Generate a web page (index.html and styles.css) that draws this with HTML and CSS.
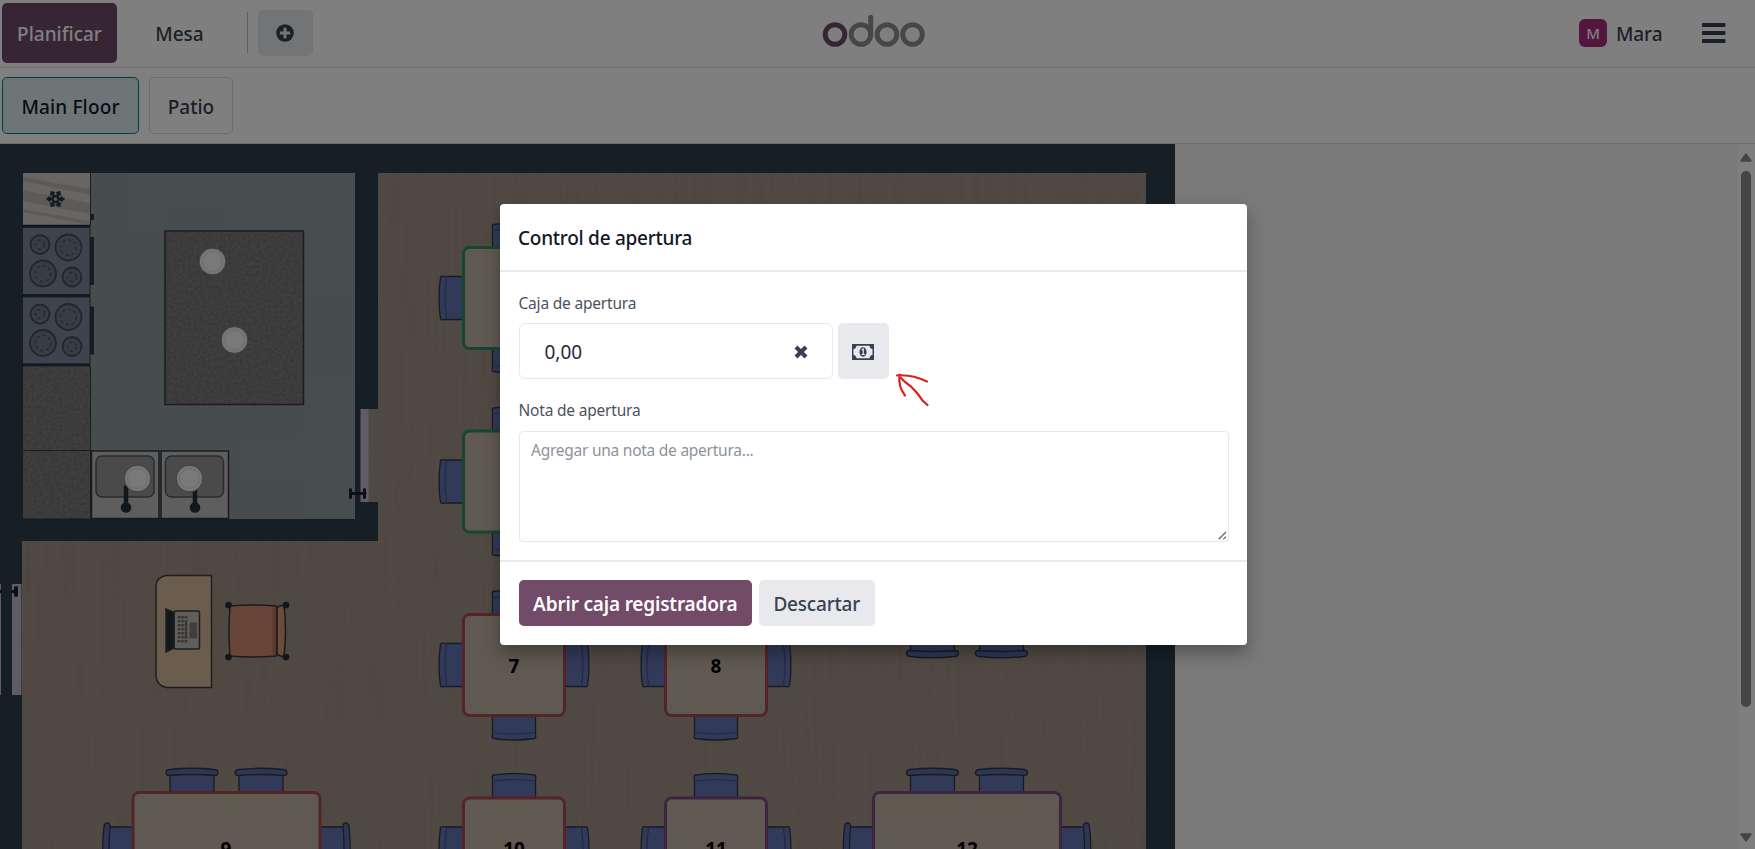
FILE: index.html
```html
<!DOCTYPE html>
<html lang="es">
<head>
<meta charset="utf-8">
<title>Odoo POS</title>
<link rel="stylesheet" href="styles.css">
</head>
<body>
<div class="app">
  <header class="navbar">
    <button class="btn-plan"><span class="t-plan">Planificar</span></button>
    <button class="btn-table"><span class="t-mesa">Mesa</span></button>
    <span class="divider"></span>
    <button class="btn-add"><svg width="18" height="18" viewBox="0 0 18 18"><circle cx="9" cy="9" r="8.8" fill="#374151"/><path d="M9 3.800v10.400M3.800 9h10.400" stroke="#e7e9ed" stroke-width="3"/></svg></button>
    <svg class="logo" width="104" height="34" viewBox="0 0 104 34" fill="none" stroke-width="5">
      <circle cx="13" cy="20.5" r="9.8" stroke="#714b67"/>
      <g stroke="#8f8f8f"><circle cx="39" cy="20.5" r="9.8"/><circle cx="65" cy="20.5" r="9.8"/><circle cx="90.5" cy="20.5" r="9.8"/><path d="M48.700 20.500V3.300" stroke-linecap="round"/></g>
    </svg>
    <div class="user"><span class="avatar">M</span><span class="t-user">Mara</span></div>
    <svg class="burger" width="24" height="20" viewBox="0 0 24 20" fill="#374151"><rect width="23.5" height="4" rx="1"/><rect y="8" width="23.5" height="4" rx="1"/><rect y="16" width="23.5" height="4" rx="1"/></svg>
  </header>
  <nav class="floors">
    <button class="floor active"><span class="t-main">Main Floor</span></button>
    <button class="floor patio"><span class="t-patio">Patio</span></button>
  </nav>
  <main class="stage">
    <svg class="map" width="1175" height="705" viewBox="0 144 1175 705">
      <defs>
        <filter id="wood" x="0" y="0" width="100%" height="100%"><feTurbulence type="fractalNoise" baseFrequency="0.22 0.008" numOctaves="3" seed="4"/><feColorMatrix values="0 0 0 0 .25  0 0 0 0 .2  0 0 0 0 .15  .9 0 0 0 -.3"/></filter>
        <filter id="grain" x="0" y="0" width="100%" height="100%"><feTurbulence type="fractalNoise" baseFrequency="0.35" numOctaves="3" seed="8"/><feColorMatrix values="0 0 0 0 0  0 0 0 0 0  0 0 0 0 0  1 0 0 0 -.35"/></filter>
        <clipPath id="room"><path d="M378 173H1146V849H22V541H378V502H368V409H378z"/></clipPath>
        <g id="chair">
          <path d="M-21.500 1V-17.500q-1-3.500 1-4q20-3 41 0q2 .5 1 4V1z" fill="#6474b2" stroke="#2d3649" stroke-width="1.300"/>
          <path d="M-20-15.500q20-3 40 0" fill="none" stroke="#45527f" stroke-width="1.200"/>
        </g>
        <g id="seat">
          <path d="M-22 8V-18H22V8z" fill="#6474b2" stroke="#2d3649" stroke-width="1.300"/>
          <path d="M-21-15q21-3 42 0v-3h-42z" fill="#566399"/>
          <path d="M-22.500-21.500q22.500-2.500 45 0q3.500.5 3.500 3.300t-3.500 2.700q-22.500-2-45 0q-3.500 0-3.500-2.700t3.500-3.300z" fill="#5e6ca8" stroke="#2d3649" stroke-width="1.300"/>
        </g>
        <g id="around">
          <use href="#chair" transform="translate(52 0)"/><use href="#chair" transform="translate(52 104) rotate(180)"/>
          <use href="#chair" transform="translate(0 52) rotate(-90)"/><use href="#chair" transform="translate(104 52) rotate(90)"/>
        </g>
        <g id="longset">
          <use href="#seat" transform="translate(60.500 0)"/><use href="#seat" transform="translate(129.500 0)"/>
          <use href="#seat" transform="translate(-6 58) rotate(-90)"/><use href="#seat" transform="translate(196 58) rotate(90)"/>
        </g>
        <g id="stove">
          <rect x=".5" y=".5" width="67.500" height="67" fill="#7d899a" stroke="#2d3f4c"/>
          <g fill="#707a88" stroke="#434c5a" stroke-width="1.800"><circle cx="18" cy="17.500" r="9.500"/><circle cx="46.500" cy="20.500" r="13"/><circle cx="21" cy="46.500" r="13"/><circle cx="50" cy="50" r="9.500"/></g>
          <g fill="none" stroke="#4a5462" stroke-width="1.500" stroke-dasharray="3 3"><circle cx="18" cy="17.500" r="4.500"/><circle cx="46.500" cy="20.500" r="7.800"/><circle cx="21" cy="46.500" r="7.800"/><circle cx="50" cy="50" r="4.500"/></g>
          <rect x="68" y="10" width="4" height="48" fill="#2b3a45"/>
        </g>
        <g id="plate"><circle r="13.400" fill="#ececec" stroke="#777" stroke-width="1"/><circle r="9.800" fill="#f2f2f2" stroke="#dcdcdc"/></g>
        <g id="sink">
          <rect x="1" y="1" width="67.500" height="67.500" fill="#bdbcbc" stroke="#2d3640" stroke-width="1.500"/>
          <rect x="5.500" y="6" width="58" height="41" rx="6" fill="#969595" stroke="#54575a" stroke-width="1.500"/>
        </g>
        <g id="faucet"><path d="M0-22V0" stroke="#22303b" stroke-width="4.500"/><circle r="5.300" fill="#22303b"/></g>
      </defs>
      <rect y="143" width="1175" height="706" fill="#2d3f4c"/>
      <path d="M378 173H1146V849H22V541H378V502H368V409H378z" fill="#a39488"/>
      <g clip-path="url(#room)"><rect x="22" y="173" width="1124" height="676" filter="url(#wood)" opacity=".4"/></g>
      <rect x="90" y="173" width="265" height="346" fill="#8e9b9f"/>
      <path d="M90 173h40v60h35v-30h60v28h78v60h52v90h-52v58h-60v40h60v40h52V173z" fill="#96a39f" opacity=".2"/>
      <g>
        <rect x="22" y="173" width="68" height="53" fill="#cfccca"/>
        <path d="M22 177l68 12v6l-68-14zM22 190l68 13v11l-68-13zM22 209l68 12v4l-68-13z" fill="#bbb7b5"/>
        <path d="M22.500 173v53h68v-53" fill="none" stroke="#2d3f4c"/>
        <g stroke="#263440" stroke-width="2.300" transform="translate(55.500 199)"><g id="arms"><path id="arm" d="M3 0h6M6.200-2.600v5.200"/><use href="#arm" transform="rotate(60)"/><use href="#arm" transform="rotate(120)"/></g><use href="#arms" transform="rotate(180)"/><circle r="3" fill="none"/></g>
        <rect x="90" y="214" width="4" height="6" fill="#2b3a45"/>
      </g>
      <use href="#stove" x="22" y="227"/><use href="#stove" x="22" y="296.500"/>
      <path d="M22 225.700h68M22 295.200h68M22 364.800h68" stroke="#22303b" stroke-width="2"/>
      <g fill="#7e7e7e" stroke="#34393e"><path d="M22.500 366h68v84.500h-68zM22.500 450.500h68V519h-68z"/><rect x="165" y="231" width="138.500" height="173.500" stroke-width="1.500"/></g>
      <path d="M23 367h67v152H23z" filter="url(#grain)" opacity=".3"/><path d="M166 232h137v172H166z" filter="url(#grain)" opacity=".3"/>
      <use href="#plate" x="212.500" y="261.500"/><use href="#plate" x="234.500" y="340"/>
      <use href="#sink" x="90.500" y="450"/><use href="#sink" x="160" y="450"/>
      <use href="#faucet" x="126" y="507.500"/><use href="#faucet" x="195" y="507.500"/>
      <use href="#plate" x="137.500" y="478.500"/><use href="#plate" x="189.500" y="478.500"/>
      <g fill="#bebbc6"><rect x="360.500" y="409" width="8" height="93"/><rect x="12" y="584" width="9.500" height="111"/><rect y="584" width="1" height="111"/></g>
      <g stroke="#172129" stroke-linecap="round"><path d="M351 493.500h14" stroke-width="3"/><path d="M350.500 489.500v8M364.500 489.500v8" stroke-width="3"/><path d="M0 591.500h1M12.500 591.500h4" stroke-width="3"/><path d="M16 588v7" stroke-width="4"/></g>
      <g stroke="#3c3b3e" stroke-width="1.500">
        <path d="M211.500 575.500H166q-10 2-10 11v90q1 9 10 11h45.500z" fill="#d6bb9c"/>
        <rect x="174" y="611" width="25.500" height="38" rx="1.500" fill="#c0bcb6"/>
        <path d="M166 609l8 3.500v35.500l-8 4z" fill="#22303b"/>
        <path d="M179 616v28M182.500 616v28M186 616v28" stroke="#746d68" stroke-width="2.800" stroke-dasharray="2.500 1.500"/><path d="M186 621v18" stroke="#746d68" stroke-width="2"/>
        <rect x="189.500" y="622.500" width="7.500" height="16" fill="#827d79" stroke="none"/>
      </g>
      <g stroke="#34363d" stroke-width="1.500">
        <path d="M230 606q24-2 46 0l.5 1v48l-.5 1q-24 2-46 0-2-25 0-50z" fill="#d38b6f"/><path d="M274 607v48" stroke="#b67156" stroke-width="3"/>
        <path d="M277 608q2-3 7-2.500 3 25 0 51-5 0-7-3z" fill="#d99777"/>
        <g fill="#22303b" stroke="#22303b"><circle cx="228.500" cy="605" r="2.600"/><circle cx="286" cy="605" r="2.600"/><circle cx="228.500" cy="657" r="2.600"/><circle cx="286" cy="657" r="2.600"/></g>
      </g>
      <use href="#around" x="462" y="246"/><use href="#around" x="462" y="429.500"/><use href="#around" x="462" y="613"/><use href="#around" x="664" y="613"/><use href="#around" x="462" y="796.500"/><use href="#around" x="664" y="796.500"/>
      <use href="#longset" x="131.500" y="791"/><use href="#longset" x="872" y="791"/>
      <g transform="translate(0 635)"><use href="#seat" transform="translate(932.500 0) rotate(180)"/><use href="#seat" transform="translate(1001.500 0) rotate(180)"/></g>
      <g fill="#bfb2a3" stroke-width="3">
        <g stroke="#2c8c56"><rect x="463.500" y="247.500" width="101" height="101" rx="6"/><rect x="463.500" y="431" width="101" height="101" rx="6"/></g>
        <g stroke="#a9484c"><rect x="463.500" y="614.500" width="101" height="101" rx="6"/><rect x="665.500" y="614.500" width="101" height="101" rx="6"/><rect x="463.500" y="798" width="101" height="101" rx="6"/><rect x="133" y="792.500" width="187" height="120" rx="6"/></g>
        <g stroke="#7b4a7e"><rect x="665.500" y="798" width="101" height="101" rx="6"/><rect x="873.500" y="792.500" width="187" height="120" rx="6"/></g>
      </g>
      <g class="num"><text x="514" y="672.500">7</text><text x="716" y="672.500">8</text><text x="514" y="856">10</text><text x="716" y="856">11</text><text x="226" y="856">9</text><text x="967" y="856">12</text></g>
    </svg>
    <div class="scrollbar">
      <svg width="12" height="9" viewBox="0 0 12 9"><path d="M6 1L11 8H1z" fill="#8a8a8a" stroke="#8a8a8a" stroke-width="1.500" stroke-linejoin="round"/></svg>
      <span class="thumb"></span>
      <svg width="12" height="9" viewBox="0 0 12 9"><path d="M6 8L11 1H1z" fill="#8a8a8a" stroke="#8a8a8a" stroke-width="1.500" stroke-linejoin="round"/></svg>
    </div>
  </main>
</div>
<div class="overlay">
  <section class="modal">
    <header class="modal-head"><span class="t-title">Control de apertura</span></header>
    <div class="modal-body">
      <label class="label"><span class="t-caja">Caja de apertura</span></label>
      <div class="cash">
        <div class="amount"><span class="t-amt">0,00</span><svg width="14" height="14" viewBox="0 0 14 14"><path d="M2 2l10 10M12 2L2 12" stroke="#374151" stroke-width="4.200"/></svg></div>
        <button class="money"><svg width="22" height="16" viewBox="0 0 22 16"><path d="M0 0h22v16H0z" fill="#374151"/><path d="M4.500 1.700h13q.3 3 3 3.300v6q-2.700.3-3 3.300h-13q-.3-3-3-3.300V5q2.700-.3 3-3.300z" fill="#e7e9ed"/><ellipse cx="11" cy="8" rx="3.600" ry="4.700" fill="#374151"/><path d="M9.700 6l1.600-1v5.300M9.600 10.500h3.200" fill="none" stroke="#e7e9ed" stroke-width="1.200"/></svg></button>
      </div>
      <label class="label second"><span class="t-nota">Nota de apertura</span></label>
      <div class="note"><span class="t-ph">Agregar una nota de apertura...</span><svg class="grip" width="9" height="9" viewBox="0 0 9 9"><path d="M.7 8.300L8 1M5.300 8.300L8 5.600" stroke="#666" stroke-width="1.300"/></svg></div>
    </div>
    <footer class="modal-foot"><button class="primary"><span class="t-abrir">Abrir caja registradora</span></button><button class="secondary"><span class="t-desc">Descartar</span></button></footer>
    <svg class="pointer" width="38" height="38" viewBox="893 370 38 38" fill="none" stroke="#d9211f" stroke-width="2.200" stroke-linecap="round"><path d="M897 375.500q14-1.500 30 6M899.500 374.500q-1.500 12 5.500 21M900 377l5 5 6 4.500 6.500 7 5 7 5 4.500"/></svg>
  </section>
</div>
</body>
</html>
```
FILE: styles.css
```css
* { box-sizing: border-box; }
body { margin: 0; font-family: "Noto Sans", "Open Sans", sans-serif; color: #374151; }
button { font: inherit; color: inherit; border: 0; padding: 0; margin: 0; display: flex; align-items: center; justify-content: center; border-radius: 5px; background: transparent; white-space: nowrap; }
span { white-space: nowrap; }
.app { width: 1755px; height: 849px; display: flex; flex-direction: column; overflow: hidden; background: #fff; }
.navbar { height: 68px; border-bottom: 1px solid #d8dadd; display: flex; align-items: flex-start; padding: 3px 0 0 2px; font-size: 19px; font-weight: 500; flex: none; }
.btn-plan { width: 115px; height: 60px; padding-top: 2px; background: #714b67; color: #fff; }
.btn-table { width: 124px; height: 60px; padding: 2px 0 0 1px; }
.divider { width: 1px; height: 41px; background: #b9bcc2; margin: 9px 10px 0 6px; }
.btn-add { width: 55px; height: 46px; margin: 7px .5px 0 -.5px; background: #e7e9ed; }
.logo { margin: 11px 0 0 509px; flex: none; }
.user { display: flex; align-items: center; gap: 9px; height: 60px; margin-left: 653px; letter-spacing: -.1px; }
.t-user { padding-top: 2px; }
.avatar { width: 28px; height: 28px; border-radius: 6px; background: #a92a7e; color: #fff; font-size: 15px; display: flex; align-items: center; justify-content: center; }
.burger { margin: 20px 0 0 40px; }
.floors { height: 76px; border-bottom: 1px solid #d8dadd; display: flex; gap: 10px; padding: 9px 2px; font-size: 19px; font-weight: 500; flex: none; }
.floor { height: 57px; padding-top: 2px; border: 1px solid #d8dadd; }
.floor.active { width: 137px; background: #dcebee; border-color: #017e84; color: #111827; letter-spacing: .15px; }
.floor.patio { width: 84px; }
.stage { flex: 1; display: flex; justify-content: space-between; background: #f3f3f3; min-height: 0; }
.map { flex: none; }
.num { font: bold 19px "Open Sans", sans-serif; text-anchor: middle; fill: #000; }
.scrollbar { width: 18px; background: #fcfcfc; display: flex; flex-direction: column; align-items: center; padding: 9px 0 7px; }
.thumb { width: 10px; height: 536px; margin: 9px 0 auto; border-radius: 5px; background: #8a8a8a; }

.overlay { position: absolute; inset: 0; background: rgba(0, 0, 0, .5); display: flex; padding: 204px 0 0 500px; align-items: flex-start; }
.modal { position: relative; width: 747px; height: 440.5px; background: #fff; border-radius: 4px; box-shadow: 0 8px 16px rgba(0, 0, 0, .3); display: flex; flex-direction: column; }
.modal-head { height: 67.500px; border-bottom: 2px solid #e9eaec; padding: 2px 18px 0; display: flex; align-items: center; font-size: 19px; font-weight: 500; letter-spacing: -.26px; color: #111827; }
.modal-body { flex: 1; padding: 18px 18px 0 18.500px; }
.label { display: flex; align-items: center; height: 26px; font-size: 15.500px; letter-spacing: -.2px; color: #4b5260; }
.label.second { margin-top: 18px; }
.cash { display: flex; gap: 5px; margin-top: 7.500px; }
.amount { width: 314px; height: 56px; border: 1px solid #e7e9ed; border-radius: 6px; display: flex; align-items: center; justify-content: space-between; padding: 1px 24px 0 25px; font-size: 19px; color: #1f2937; }
.money { width: 51px; height: 56px; padding-top: 2px; background: #e7e9ed; }
.note { position: relative; height: 111px; margin-top: 8px; border: 1px solid #e7e9ec; border-radius: 4px; padding: 7px 11.500px; font-size: 15.500px; letter-spacing: -.25px; line-height: 23px; color: #8d929b; }
.grip { position: absolute; right: 1px; bottom: 1px; }
.modal-foot { height: 85px; border-top: 2px solid #e9eaec; padding: 18.500px 18px 0 18.500px; display: flex; gap: 6.500px; font-size: 19px; }
.primary { width: 233.500px; height: 46px; padding-top: 1px; background: #714b67; color: #fff; font-weight: 600; letter-spacing: -.18px; }
.secondary { width: 116.500px; height: 46px; padding-top: 1px; background: #e7e9ed; font-weight: 500; letter-spacing: -.2px; }
.pointer { position: absolute; left: 393px; top: 166px; }
```
